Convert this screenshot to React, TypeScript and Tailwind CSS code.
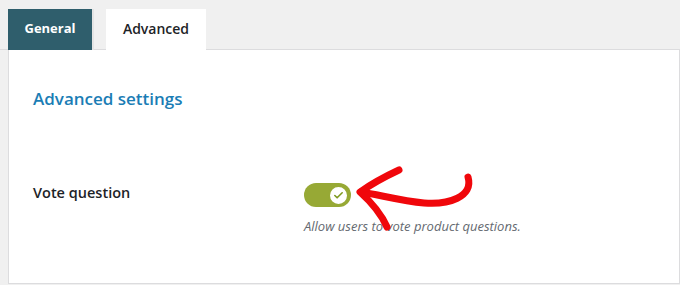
import { Check } from 'lucide-react'

const font = { fontFamily: '"Open Sans", "Noto Sans", sans-serif' }

function Toggle() {
  return (
    <div className="relative flex h-6 w-[47px] items-center rounded-full bg-[#97a935]">
      <div className="absolute right-[2px] flex h-[21px] w-[21px] items-center justify-center rounded-full border-2 border-[#97a935] bg-white">
        <Check size={11} strokeWidth={3.5} color="#7f9a1f" />
      </div>
    </div>
  )
}

function Arrow() {
  return (
    <svg
      className="pointer-events-none absolute left-[352px] top-[165px]"
      width="130"
      height="70"
      viewBox="0 0 130 70"
      fill="none"
    >
      <path
        d="M116 12 C122 32 96 40 72 38 C50 36 28 30 9 27"
        stroke="#f0070b"
        strokeWidth="7"
        strokeLinecap="round"
        strokeLinejoin="round"
      />
      <path
        d="M47 5 C32 12 18 20 8 27 C18 36 28 46 35 62"
        stroke="#f0070b"
        strokeWidth="7"
        strokeLinecap="round"
        strokeLinejoin="round"
      />
    </svg>
  )
}

export default function App() {
  return (
    <div className="relative h-[285px] w-[680px] overflow-hidden bg-[#f0f0f0]" style={font}>
      {/* tabs */}
      <div className="flex h-[50px] items-end gap-3 border-b border-[#dcdcde] pl-2">
        <div className="-mb-px flex h-[41px] w-[86px] items-center justify-center border-r-2 border-[#e4e4e4] bg-[#2f5e6c] pb-[2px] text-[13px] font-bold text-white">
          General
        </div>
        <div className="-mb-px flex h-[41px] w-[100px] items-center justify-center bg-white pb-[2px] text-[14px] font-semibold text-[#1d2327]">
          Advanced
        </div>
      </div>

      {/* panel */}
      <div className="ml-2 h-[234px] w-[672px] border-x border-b border-[#dcdcde] bg-white pl-6 pt-[37px]">
        <h2 className="text-[17px] leading-6 font-semibold text-[#1a7db5]">Advanced settings</h2>

        <div className="mt-[72px] flex">
          <div className="w-[271px] text-[14.5px] leading-5 font-semibold text-[#1d2327]">
            Vote question
          </div>
          <div className="flex flex-col">
            <Toggle />
            <p className="mt-[11px] text-[13px] leading-4 italic text-[#646970]">
              Allow users to vote product questions.
            </p>
          </div>
        </div>
      </div>

      <Arrow />
    </div>
  )
}
